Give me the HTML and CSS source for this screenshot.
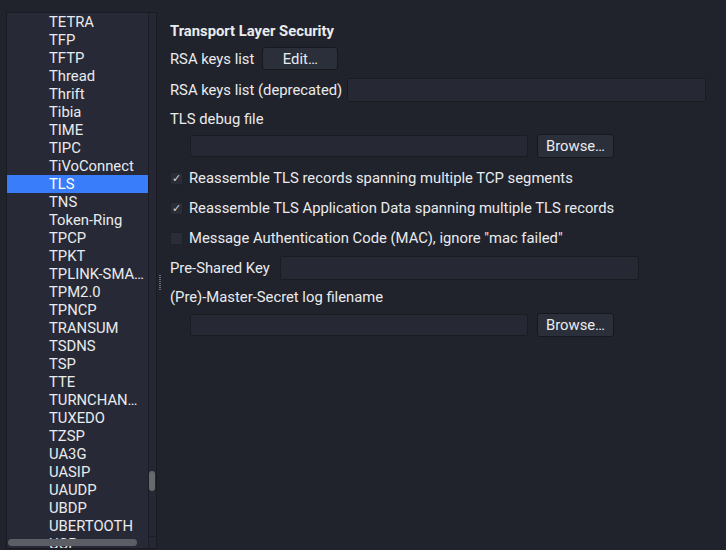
FILE: index.html
```html
<!DOCTYPE html>
<html>
<head>
<meta charset="utf-8">
<link rel="stylesheet" href="styles.css">
</head>
<body>
<div class="app">
  <div class="listpanel">
    <div class="viewport">
      <ul class="items">
        <li>TETRA</li><li>TFP</li><li>TFTP</li><li>Thread</li><li>Thrift</li><li>Tibia</li><li>TIME</li><li>TIPC</li><li>TiVoConnect</li>
        <li class="sel">TLS</li><li>TNS</li><li>Token-Ring</li><li>TPCP</li><li>TPKT</li><li>TPLINK-SMA…</li><li>TPM2.0</li><li>TPNCP</li><li>TRANSUM</li><li>TSDNS</li><li>TSP</li><li>TTE</li><li>TURNCHAN…</li><li>TUXEDO</li><li>TZSP</li><li>UA3G</li><li>UASIP</li><li>UAUDP</li><li>UBDP</li><li>UBERTOOTH</li><li>UCP</li>
      </ul>
      <div class="hscroll"><div class="hthumb"></div></div>
    </div>
    <div class="vscroll"><div class="vthumb"></div><div class="corner"></div></div>
  </div>
  <div class="splitter"><div class="grip"></div></div>
  <div class="prefs">
    <div class="row heading">Transport Layer Security</div>
    <div class="row r-rsa"><span>RSA keys list</span><button class="btn edit">Edit…</button></div>
    <div class="row r-dep"><span>RSA keys list (deprecated)</span><div class="input wide"></div></div>
    <div class="row r-lbl"><span>TLS debug file</span></div>
    <div class="row r-file"><div class="input file"></div><button class="btn browse">Browse…</button></div>
    <div class="row r-first r-check"><span class="box on">✓</span><span>Reassemble TLS records spanning multiple TCP segments</span></div>
    <div class="row r-check"><span class="box on">✓</span><span>Reassemble TLS Application Data spanning multiple TLS records</span></div>
    <div class="row r-check"><span class="box"></span><span>Message Authentication Code (MAC), ignore "mac failed"</span></div>
    <div class="row r-psk"><span>Pre-Shared Key</span><div class="input wide"></div></div>
    <div class="row r-lbl2"><span>(Pre)-Master-Secret log filename</span></div>
    <div class="row r-file2"><div class="input file"></div><button class="btn browse">Browse…</button></div>
  </div>
</div>
</body>
</html>
```
FILE: styles.css
```css
* { box-sizing: border-box; }
html, body { margin: 0; padding: 0; }
body {
  background: #21232c;
  color: #eaebee;
  font-family: Roboto, "Liberation Sans", sans-serif;
  font-size: 14.8px;
  width: 726px;
  height: 550px;
  overflow: hidden;
}
.app { display: flex; height: 550px; }
.listpanel {
  margin: 12px 0 0 6px;
  width: 151px;
  height: 537px;
  border: 1px solid #191b21;
  background: #272a36;
  display: flex;
  overflow: hidden;
}
.viewport { position: relative; width: 141px; height: 100%; overflow: hidden; }
.items { list-style: none; margin: 0; padding: 0; }
.items li {
  height: 18px;
  line-height: 19px;
  padding-left: 42px;
  white-space: nowrap;
}
.items li.sel { background: #3a7dfb; color: #fff; }
.hscroll {
  position: absolute;
  left: 0; right: 0; bottom: 0;
  height: 12px;
  padding: 3px 0 2px 1px;
}
.hthumb { width: 129px; height: 7px; border-radius: 4px; background: #5b5e64; }
.vscroll {
  width: 8px;
  border-left: 1px solid #1c1e25;
  background: #252834;
  display: flex;
  flex-direction: column;
  padding-top: 458px;
}
.vthumb { width: 6px; height: 20px; border-radius: 3px; background: #67696f; }
.corner { margin-top: auto; height: 12px; border-top: 1px solid #1c1e25; }
.splitter { width: 13px; display: flex; flex-direction: column; padding-top: 275px; }
.grip {
  margin-left: 2px;
  width: 2px;
  height: 16px;
  background: repeating-linear-gradient(to bottom, #6d7079 0 1px, transparent 1px 2px);
}
.prefs { display: flex; flex-direction: column; padding-top: 21px; }
.row { display: flex; align-items: center; white-space: nowrap; }
.heading { height: 20px; font-weight: bold; }
.r-rsa { margin-top: 6px; height: 23px; gap: 8px; }
.r-dep { margin-top: 8px; height: 24px; gap: 5px; }
.r-lbl { margin-top: 8px; height: 18px; }
.r-file { margin-top: 6px; height: 24px; padding-left: 20px; gap: 9px; }
.r-first { margin-top: 5px; }
.r-check { height: 30px; gap: 6px; }
.r-psk { margin-top: 3px; height: 24px; gap: 10px; }
.r-lbl2 { margin-top: 8px; height: 18px; }
.r-file2 { margin-top: 7px; height: 23px; padding-left: 20px; gap: 9px; }
.btn {
  font: inherit;
  color: #eaebee;
  background: #2b2f3a;
  border: 1px solid #16181d;
  border-radius: 3px;
  height: 23px;
  padding: 0;
}
.edit { width: 76px; }
.browse { width: 77px; height: 24px; }
.input {
  background: #262833;
  border: 1px solid #1a1c22;
  border-radius: 2px;
}
.wide { width: 359px; height: 24px; }
.file { width: 338px; height: 22px; }
.box {
  width: 13px;
  height: 13px;
  background: #2a2d38;
  border: 1px solid #1f2129;
  font-size: 11px;
  line-height: 11px;
  text-align: center;
  color: #d8d9dc;
}
```
